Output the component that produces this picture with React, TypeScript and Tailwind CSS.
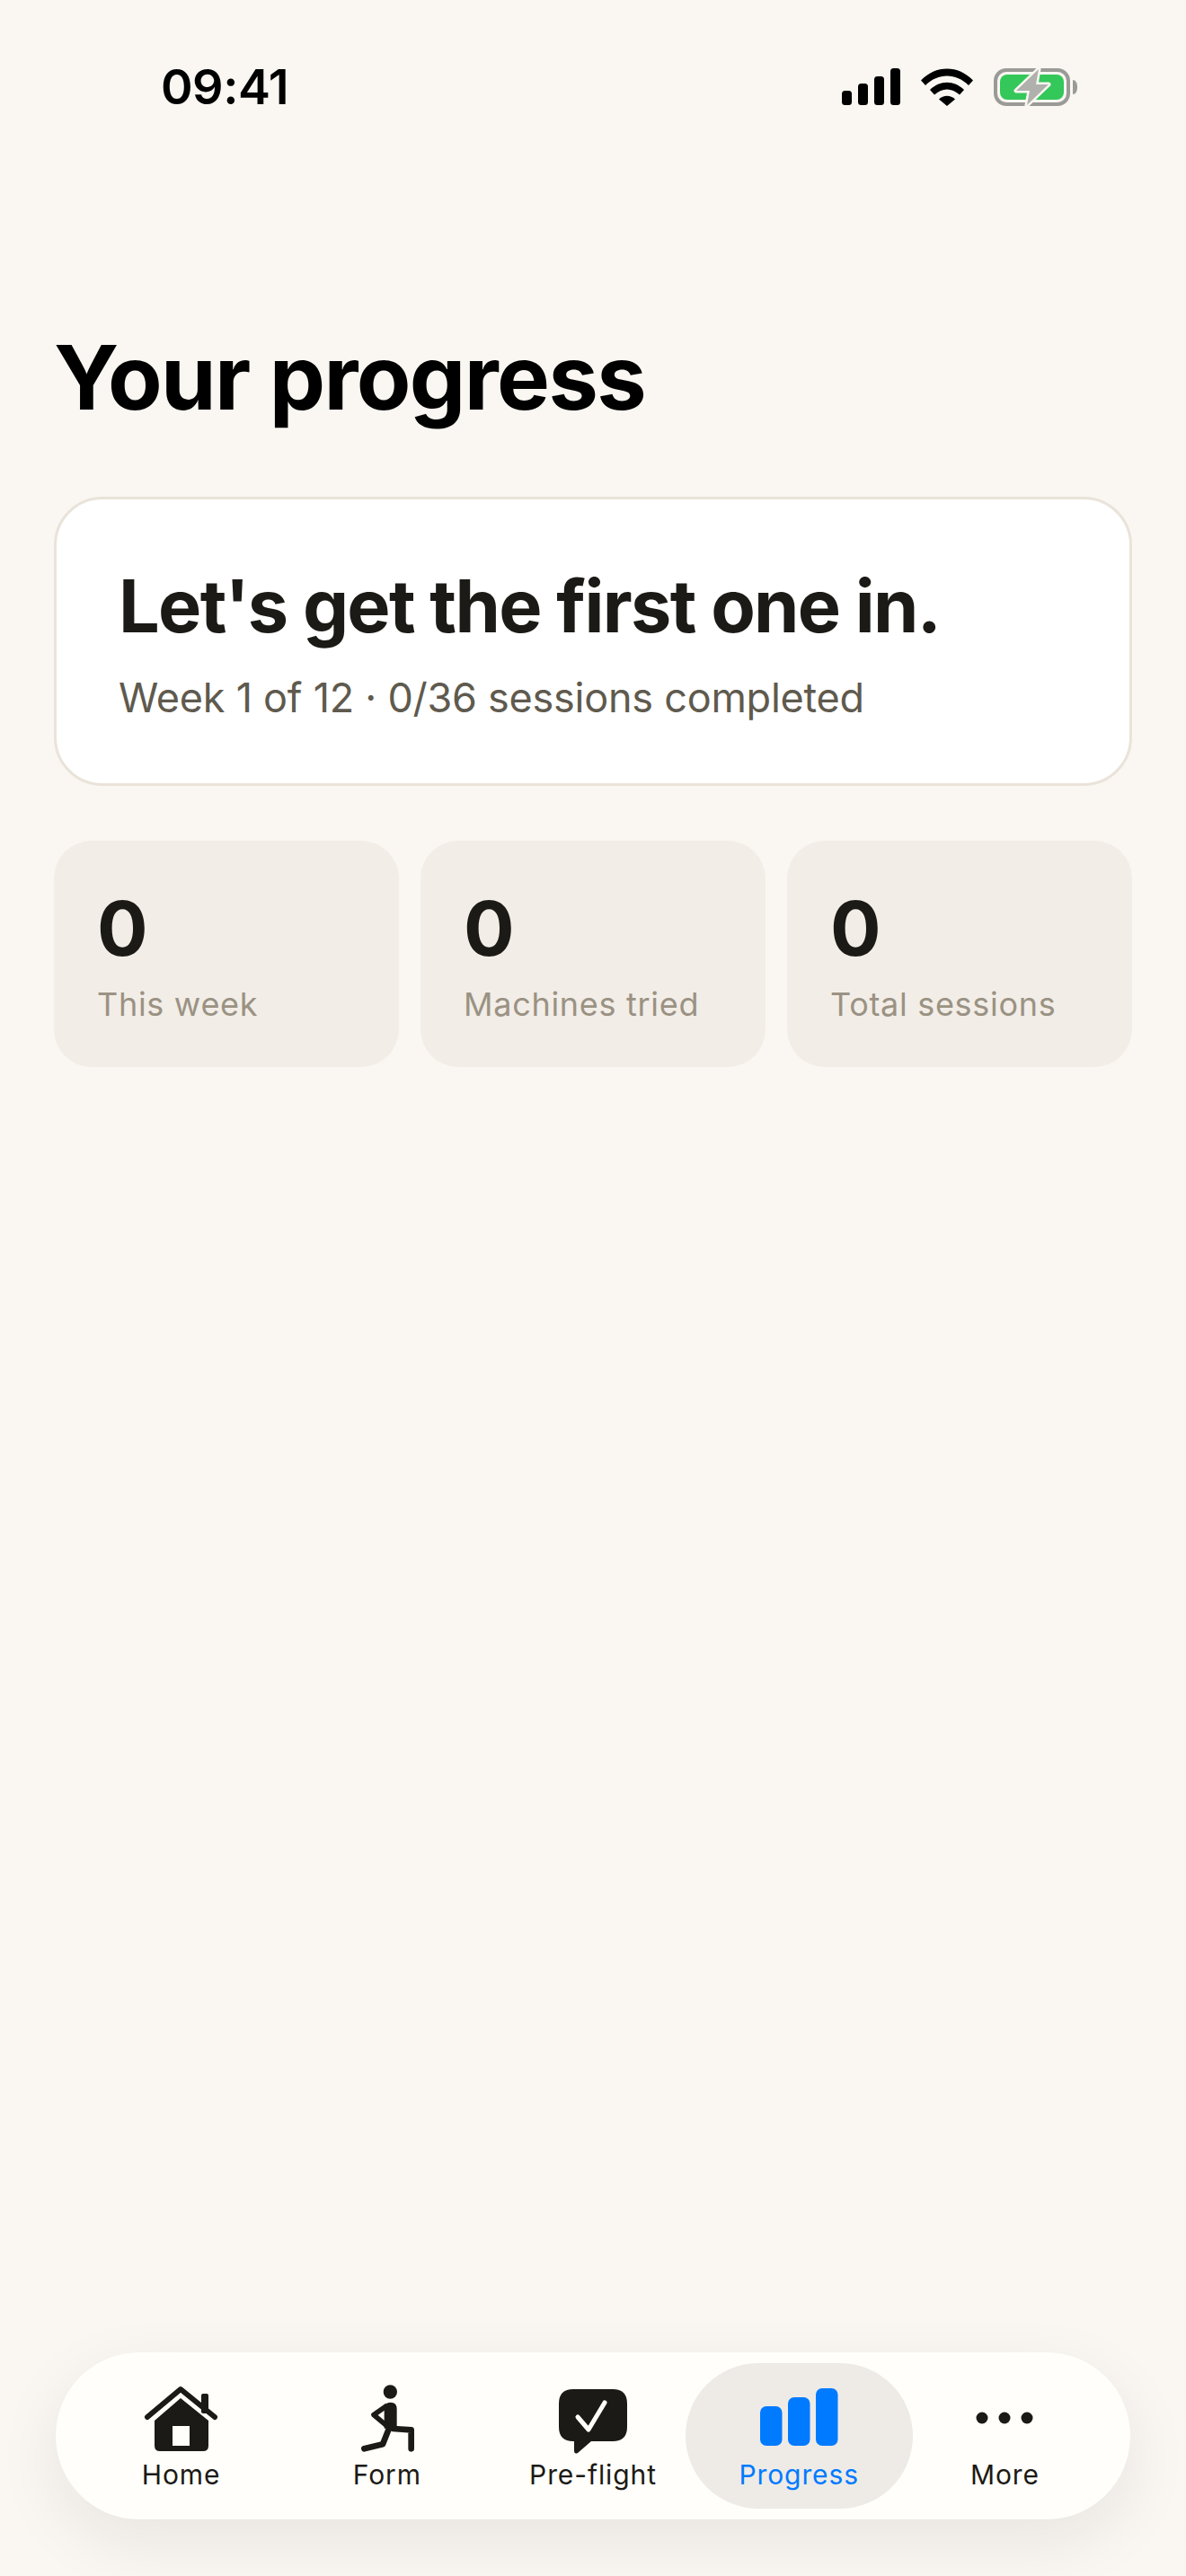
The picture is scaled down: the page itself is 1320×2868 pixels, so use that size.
const tabs = ["Home", "Form", "Pre-flight", "Progress", "More"];

const stats = [
  { value: "0", label: "This week" },
  { value: "0", label: "Machines tried" },
  { value: "0", label: "Total sessions" },
];

function StatusIcons() {
  return (
    <div className="flex items-center">
      {/* signal */}
      <svg width="65" height="42" viewBox="0 0 65 42" className="mr-[23px]">
        <rect x="0" y="25" width="11" height="16" rx="3.5" fill="#000" />
        <rect x="18" y="17" width="11" height="24" rx="3.5" fill="#000" />
        <rect x="36" y="9" width="11" height="32" rx="3.5" fill="#000" />
        <rect x="54" y="0" width="11" height="41" rx="3.5" fill="#000" />
      </svg>
      {/* wifi */}
      <svg width="58" height="42" viewBox="0 0 58 42" className="mr-[23px]">
        <path d="M0 13.5 C16 -4 42 -4 58 13.5 L53 19 C39 5 19 5 5 19 Z" fill="#000" />
        <path d="M10 24 C21 13 37 13 48 24 L43 29.5 C34 21.5 24 21.5 15 29.5 Z" fill="#000" />
        <path d="M20 34.5 C25 29.5 33 29.5 38 34.5 L29 42 Z" fill="#000" />
      </svg>
      {/* battery charging */}
      <svg width="93" height="44" viewBox="0 0 93 44">
        <rect x="2" y="3" width="81" height="38" rx="12" fill="none" stroke="#9a9a97" strokeWidth="4" />
        <rect x="7" y="8" width="71" height="28" rx="8" fill="#34c759" />
        <path d="M88 14 C91 14 93 17 93 22 C93 27 91 30 88 30 Z" fill="#9a9a97" />
        <path
          d="M50 2 L25 26 L40 26 L37 42 L61 19 L47 19 Z"
          fill="#b0b0ac"
          stroke="#faf7f2"
          strokeWidth="5"
          strokeLinejoin="round"
          paintOrder="stroke"
        />
      </svg>
    </div>
  );
}

function TabIcon({ name }: { name: string }) {
  if (name === "Home") {
    return (
      <svg width="86" height="78" viewBox="0 0 86 78" fill="#1c1a16">
        <rect x="65" y="11" width="8" height="22" rx="2" />
        <path
          d="M5 37 L42 6 L80 37"
          fill="none"
          stroke="#1c1a16"
          strokeWidth="6"
          strokeLinecap="round"
          strokeLinejoin="round"
        />
        <path d="M42 16 L73 41 L73 69 Q73 75 67 75 L19 75 Q13 75 13 69 L13 41 Z" />
        <rect x="33" y="47" width="19" height="22" fill="#fffefa" />
      </svg>
    );
  }
  if (name === "Form") {
    return (
      <svg width="70" height="80" viewBox="790 60 210 240" fill="#1c1a16">
        <circle cx="905" cy="93" r="23" />
        <path d="M885 150 Q885 128 906 128 Q927 128 927 150 L927 215 L885 215 Z" />
        <path
          d="M895 138 L850 170 L892 205"
          fill="none"
          stroke="#1c1a16"
          strokeWidth="17"
          strokeLinejoin="round"
        />
        <path
          d="M915 216 L975 220 L975 283"
          fill="none"
          stroke="#1c1a16"
          strokeWidth="20"
          strokeLinecap="round"
          strokeLinejoin="round"
        />
        <path
          d="M905 205 L880 268 L818 283"
          fill="none"
          stroke="#1c1a16"
          strokeWidth="20"
          strokeLinecap="round"
          strokeLinejoin="round"
        />
      </svg>
    );
  }
  if (name === "Pre-flight") {
    return (
      <svg width="76" height="72" viewBox="0 0 76 72">
        <path
          d="M16 0 L60 0 Q76 0 76 16 L76 42 Q76 58 60 58 L36 58 L21 71 Q17 73 17 68 L17 58 L16 58 Q0 58 0 42 L0 16 Q0 0 16 0 Z"
          fill="#1c1a16"
        />
        <path
          d="M21 31 L33 45 L51 15"
          fill="none"
          stroke="#fffefa"
          strokeWidth="5"
          strokeLinecap="round"
          strokeLinejoin="round"
        />
      </svg>
    );
  }
  if (name === "Progress") {
    return (
      <svg width="87" height="64" viewBox="0 0 87 64" fill="#007aff">
        <rect x="0" y="20" width="24.5" height="44" rx="7" />
        <rect x="31" y="10" width="24.5" height="54" rx="7" />
        <rect x="62" y="0" width="24.5" height="64" rx="7" />
      </svg>
    );
  }
  return (
    <svg width="64" height="14" viewBox="0 0 64 14" fill="#1c1a16">
      <circle cx="7" cy="7" r="6.5" />
      <circle cx="32" cy="7" r="6.5" />
      <circle cx="57" cy="7" r="6.5" />
    </svg>
  );
}

export default function App() {
  return (
    <div
      className="flex h-[2868px] w-[1320px] flex-col bg-[#faf7f2]"
      style={{ fontFamily: "Inter, sans-serif" }}
    >
      {/* status bar */}
      <div className="flex h-[162px] items-start justify-between pl-[179px] pr-[121px] pt-[64px]">
        <span className="text-[54px] font-semibold leading-[66px] tracking-[-0.5px] text-black">09:41</span>
        <div className="pt-[11px]">
          <StatusIcons />
        </div>
      </div>

      <div className="flex flex-1 flex-col px-[60px]">
        <h1 className="mt-[199px] text-[99px] font-bold leading-[118px] tracking-[-1.6px] text-black">
          Your progress
        </h1>

        <div className="mt-[74px] flex h-[322px] flex-col rounded-[54px] border-[3px] border-[#e9e3d9] bg-white pl-[69px] pt-[73px]">
          <h2 className="text-[81px] font-bold leading-[92px] tracking-[-1.7px] text-[#1c1a16]">
            Let's get the first one in.
          </h2>
          <p className="mt-[29px] text-[45px] leading-[54px] tracking-[-0.25px] text-[#5f5a4e]">
            Week 1 of 12 · 0/36 sessions completed
          </p>
        </div>

        <div className="mt-[61px] grid grid-cols-3 gap-[24px]">
          {stats.map((stat) => (
            <div key={stat.label} className="h-[252px] rounded-[42px] bg-[#f2ede7] pl-[48px] pt-[48px]">
              <div className="text-[84px] font-bold leading-[100px] text-[#1c1a16]">{stat.value}</div>
              <div className="mt-[12px] text-[36px] leading-[44px] tracking-[0.7px] text-[#9a9283]">{stat.label}</div>
            </div>
          ))}
        </div>
      </div>

      {/* tab bar */}
      <div className="mx-[62px] mb-[63px] flex h-[186px] rounded-full bg-[#fffefa] px-[25px] shadow-[0_24px_72px_rgba(28,26,22,0.08)]">
        {tabs.map((tab) => (
          <div key={tab} className="relative flex flex-1 flex-col items-center">
            {tab === "Progress" && (
              <div className="absolute inset-y-[12px] -inset-x-[12px] rounded-full bg-[#eeebe6]" />
            )}
            <div className="relative flex h-[110px] items-end justify-center">
              <div className={tab === "More" ? "mb-[30px]" : tab === "Progress" ? "mb-[6px]" : "mb-[-3px]"}>
                <TabIcon name={tab} />
              </div>
            </div>
            <span
              className={
                tab === "Progress"
                  ? "relative mt-[8px] text-[30px] font-normal leading-[36px] tracking-[0.9px] text-[#007aff]"
                  : "relative mt-[8px] text-[30px] font-normal leading-[36px] tracking-[0.9px] text-[#1c1a16]"
              }
            >
              {tab}
            </span>
          </div>
        ))}
      </div>
    </div>
  );
}
